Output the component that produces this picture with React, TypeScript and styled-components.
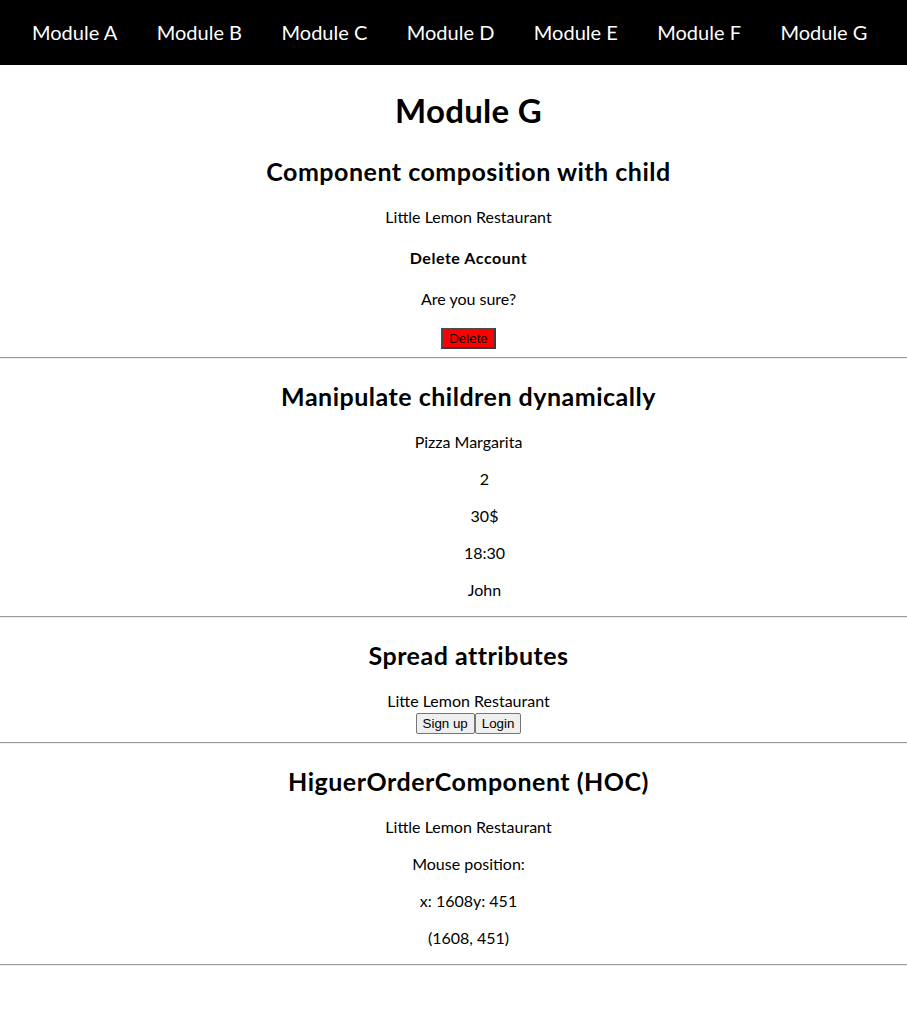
import React from "react";
import styled, { createGlobalStyle } from "styled-components";

const Global = createGlobalStyle`
  html, body { margin: 0; padding: 0; background: #fff; }
  body {
    font-family: Lato, "Open Sans", sans-serif;
    font-size: 16px;
    line-height: 1.33;
    color: #000;
  }
`;

const Nav = styled.nav`
  background: #000;
  height: 65px;
  display: flex;
  align-items: center;
`;

const NavList = styled.ul`
  list-style: none;
  margin: 0;
  padding: 0 0 0 32px;
  display: flex;
  gap: 39.5px;
`;

const NavLink = styled.a`
  color: #fff;
  text-decoration: none;
  font-size: 20px;
`;

const Section = styled.section`
  text-align: center;
  padding-left: 30px;
`;

const Title = styled.h1`
  font-size: 33px;
  line-height: 42.5px;
  letter-spacing: 0.25px;
  font-weight: 700;
  margin: 24px 0 23px;
`;

const SectionTitle = styled.h2`
  font-size: 25px;
  line-height: 32px;
  letter-spacing: 0.5px;
  font-weight: 700;
  margin: 21px 0 19px;
`;

const Para = styled.p<{ $indent?: boolean }>`
  margin: 16px 0;
  line-height: 21px;
  padding-left: ${(p) => (p.$indent ? "32px" : "0")};
`;

const SubTitle = styled.h4`
  margin: 20px 0;
  font-weight: 700;
  font-size: 16px;
  letter-spacing: 0.55px;
`;

const Line = styled.div``;

const ButtonRow = styled.div<{ $offset?: number }>`
  display: flex;
  justify-content: center;
  padding-top: ${(p) => p.$offset ?? 0}px;
`;

const Rule = styled.hr`
  margin: 8px 0;
  border: 0;
  border-top: 1px solid #9a9a9a;
  border-bottom: 1px solid #eeeeee;
`;

const DangerButton = styled.button`
  font-family: "Liberation Sans", Arial, sans-serif;
  font-size: 13.33px;
  height: 21px;
  background: #ff0000;
  color: #000;
  border: 2px solid;
  border-color: #4a4a4a #3a3a3a #3a3a3a #4a4a4a;
  padding: 0 6px;
  line-height: normal;
`;

const PlainButton = styled.button`
  font-family: "Liberation Sans", Arial, sans-serif;
  font-size: 13.33px;
  height: 21px;
  background: #efefef;
  color: #000;
  border: 1px solid #767676;
  border-radius: 2px;
  padding: 0 6px;
  line-height: normal;
`;

const modules = ["A", "B", "C", "D", "E", "F", "G"];

export default function App() {
  return (
    <>
      <Global />
      <Nav>
        <NavList>
          {modules.map((m) => (
            <li key={m}>
              <NavLink href="#">Module {m}</NavLink>
            </li>
          ))}
        </NavList>
      </Nav>
      <Section>
        <Title>Module G</Title>
        <SectionTitle>Component composition with child</SectionTitle>
        <Para>Little Lemon Restaurant</Para>
        <SubTitle>Delete Account</SubTitle>
        <Para>Are you sure?</Para>
        <ButtonRow $offset={3}>
          <DangerButton>Delete</DangerButton>
        </ButtonRow>
      </Section>
      <Rule />
      <Section>
        <SectionTitle>Manipulate children dynamically</SectionTitle>
        <Para>Pizza Margarita</Para>
        <Para $indent>2</Para>
        <Para $indent>30$</Para>
        <Para $indent>18:30</Para>
        <Para $indent>John</Para>
      </Section>
      <Rule />
      <Section>
        <SectionTitle>Spread attributes</SectionTitle>
        <Line>Litte Lemon Restaurant</Line>
        <ButtonRow $offset={2}>
          <PlainButton>Sign up</PlainButton>
          <PlainButton>Login</PlainButton>
        </ButtonRow>
      </Section>
      <Rule />
      <Section>
        <SectionTitle>HiguerOrderComponent (HOC)</SectionTitle>
        <Para>Little Lemon Restaurant</Para>
        <Para>Mouse position:</Para>
        <Para>x: 1608y: 451</Para>
        <Para>(1608, 451)</Para>
      </Section>
      <Rule />
    </>
  );
}
